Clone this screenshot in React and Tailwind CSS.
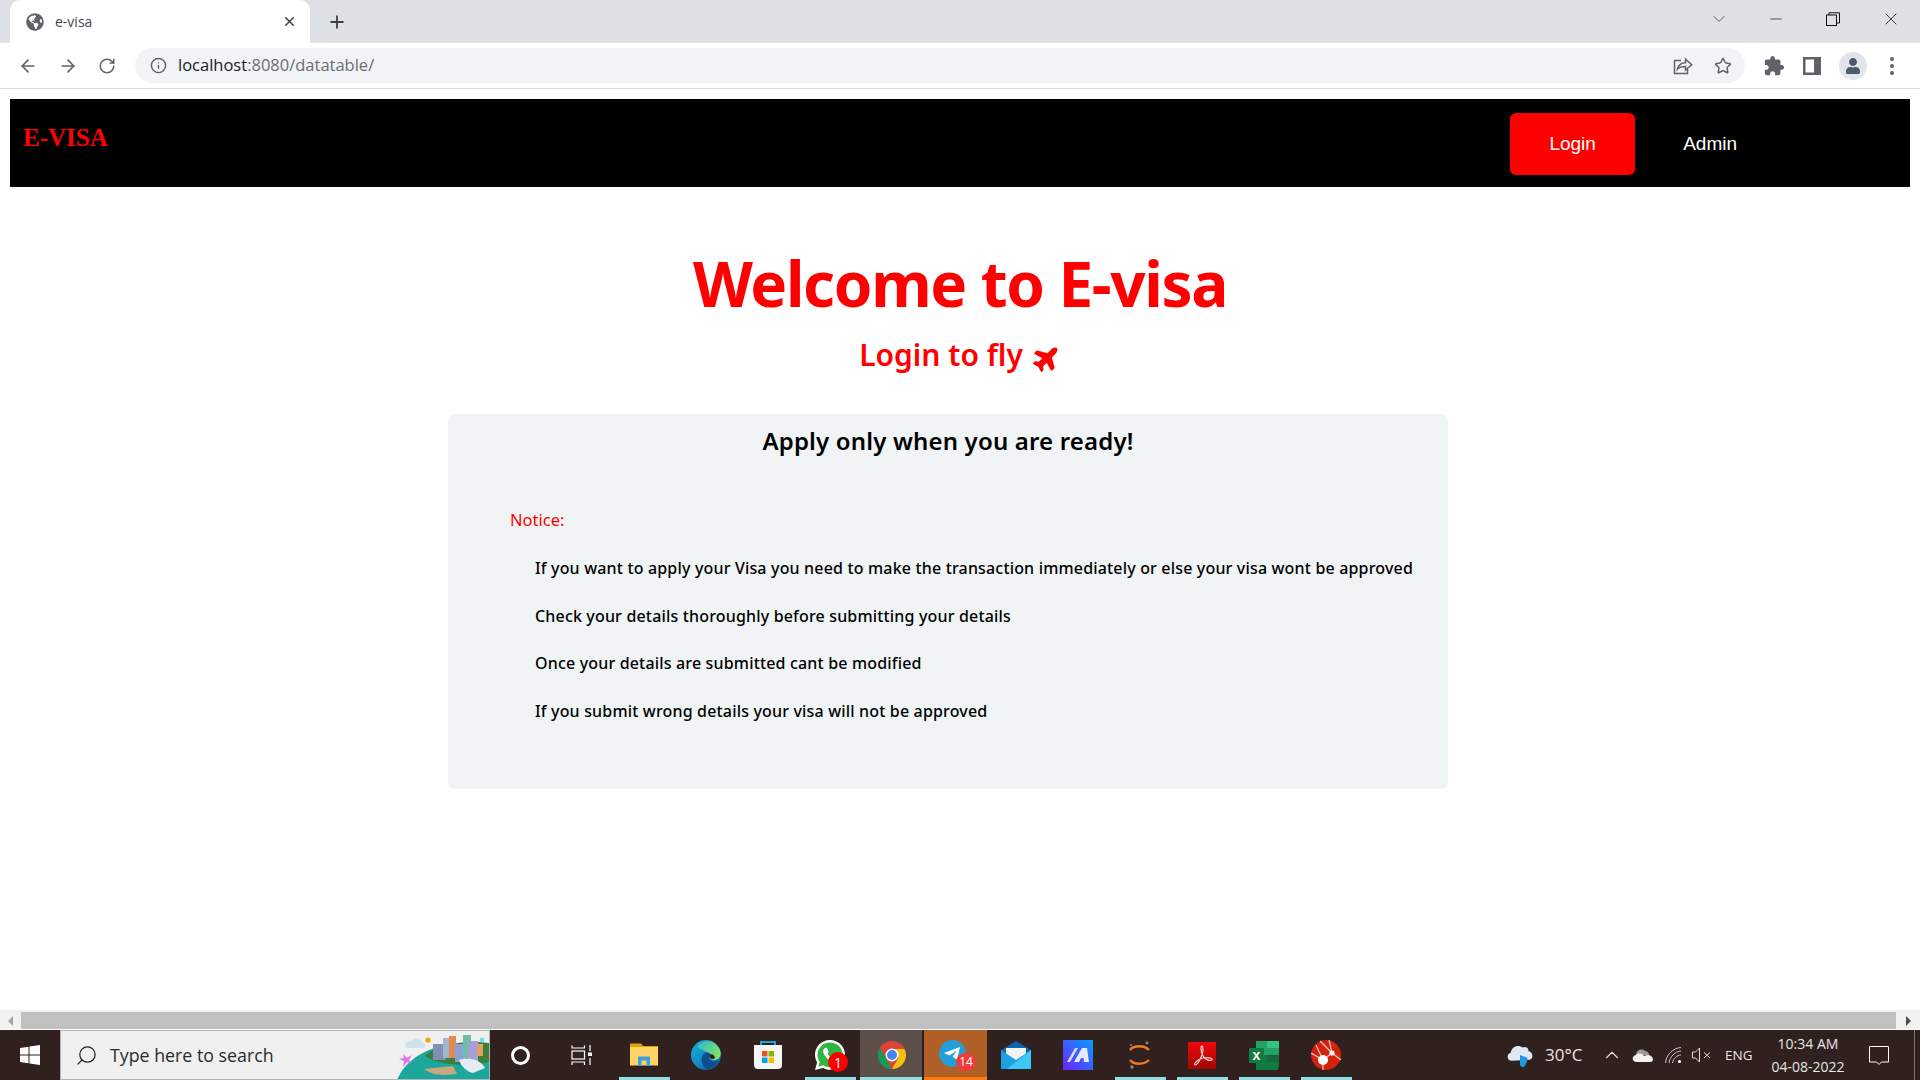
import React from "react";
import { ArrowLeft, ArrowRight, RotateCw, Info, Star, X, Plus, Minus, ChevronDown, ChevronUp, Search } from "lucide-react";
import { FaGlobeAmericas, FaPlane, FaUser } from "react-icons/fa";

const NOTES = [
  "If you want to apply your Visa you need to make the transaction immediately or else your visa wont be approved",
  "Check your details thoroughly before submitting your details",
  "Once your details are submitted cant be modified",
  "If you submit wrong details your visa will not be approved",
];

function TabStrip() {
  return (
    <div className="flex h-[43px] items-end bg-[#dee1e6] pl-[10px]">
      <div className="flex h-[43px] w-[300px] items-center rounded-t-[10px] bg-white pl-[16px] pr-[13px]">
        <FaGlobeAmericas className="h-[18px] w-[18px] text-[#5f6368]" />
        <span className="ml-[11px] flex-1 font-['Open_Sans'] text-[14px] text-[#45494e]">e-visa</span>
        <X className="h-[15px] w-[15px] text-[#3c4043]" strokeWidth={2.4} />
      </div>
      <div className="flex h-[43px] w-[54px] items-center justify-center">
        <Plus className="h-[20px] w-[20px] text-[#3c4043]" strokeWidth={2.2} />
      </div>
      <div className="flex-1" />
      <div className="flex h-[38px] items-center self-start text-[#222]">
        <ChevronDown className="mr-[38px] h-[20px] w-[20px] text-[#3c4043]" strokeWidth={1} />
        <Minus className="mr-[41px] h-[18px] w-[18px]" strokeWidth={1} />
        <svg width="14" height="14" viewBox="0 0 14 14" fill="none" stroke="#111" strokeWidth="1" className="mr-[41px]">
          <rect x="0.5" y="3" width="10" height="10.5" />
          <path d="M3 3V0.8H13.5V11H10.5" />
        </svg>
        <X className="mr-[19px] h-[20px] w-[20px]" strokeWidth={1} />
      </div>
    </div>
  );
}

function Toolbar() {
  return (
    <div className="flex h-[46px] items-center border-b border-[#dadce0] bg-white">
      <div className="flex w-[135px] items-center pl-[18px] text-[#5f6368]">
        <ArrowLeft className="h-[20px] w-[20px]" strokeWidth={2} />
        <ArrowRight className="ml-[20px] h-[20px] w-[20px]" strokeWidth={2} />
        <RotateCw className="ml-[20px] h-[18px] w-[18px]" strokeWidth={2} />
      </div>
      <div className="flex h-[35px] flex-1 items-center rounded-full bg-[#f1f3f4] pl-[15px] pr-[13px]">
        <Info className="h-[17px] w-[17px] text-[#5f6368]" strokeWidth={2} />
        <span className="ml-[11px] flex-1 font-['Open_Sans'] text-[16.5px] text-[#6a6e72]">
          <span className="text-[#202124]">localhost</span>:8080/datatable/
        </span>
        <svg width="20" height="20" viewBox="0 0 20 20" fill="none" stroke="#5f6368" strokeWidth="1.5" className="mr-[21px]">
          <path d="M8 4.5H1.5V17.5H14.5V13" />
          <path d="M4.5 13C5.5 9 8.5 6.8 12.5 6.8V3.2L18.8 8.8 12.5 14V10.5C9.5 10.5 6.5 11 4.5 13Z" />
        </svg>
        <Star className="h-[18px] w-[18px] text-[#5f6368]" strokeWidth={2} />
      </div>
      <div className="flex w-[175px] items-center pl-[18px] text-[#5f6368]">
        <svg width="22" height="22" viewBox="0 0 24 24" fill="#5f6368">
          <path d="M20.500 11H19V7c0-1.100-.9-2-2-2h-4V3.500C13 2.120 11.880 1 10.500 1S8 2.120 8 3.500V5H4c-1.100 0-1.990.9-1.990 2v3.800H3.500c1.490 0 2.700 1.210 2.700 2.700s-1.210 2.700-2.700 2.700H2V20c0 1.100.9 2 2 2h3.800v-1.500c0-1.490 1.210-2.700 2.700-2.700 1.490 0 2.700 1.210 2.700 2.700V22H17c1.100 0 2-.9 2-2v-4h1.500c1.380 0 2.500-1.120 2.500-2.500S21.880 11 20.500 11z" />
        </svg>
        <svg width="18" height="18" viewBox="0 0 18 18" className="ml-[18px]">
          <path fill="#5f6368" fillRule="evenodd" d="M0 0H18V18H0ZM2.500 2.500V15.500H11V2.500Z" />
        </svg>
        <div className="ml-[18px] flex h-[28px] w-[28px] items-center justify-center rounded-full bg-[#e2e5ea]">
          <FaUser className="h-[16px] w-[16px] text-[#4e5a6e]" />
        </div>
        <div className="ml-[23px] flex flex-col gap-[3px]">
          <div className="h-[4px] w-[4px] rounded-full bg-[#5f6368]" />
          <div className="h-[4px] w-[4px] rounded-full bg-[#5f6368]" />
          <div className="h-[4px] w-[4px] rounded-full bg-[#5f6368]" />
        </div>
      </div>
    </div>
  );
}

function Navbar() {
  return (
    <nav className="mx-[10px] mt-[10px] flex h-[88px] items-center bg-black pl-[13px]">
      <span className="mb-[10px] flex-1 font-['Liberation_Serif'] text-[25px] font-bold text-[#ff0000]">E-VISA</span>
      <button className="mr-[48px] mt-[2px] h-[62px] w-[125px] rounded-[6px] bg-[#ff0000] font-['Liberation_Sans'] text-[19px] text-white">Login</button>
      <span className="mr-[173px] mt-[2px] font-['Liberation_Sans'] text-[19px] text-white">Admin</span>
    </nav>
  );
}

function Card() {
  return (
    <section className="ml-[448px] mt-[37px] h-[375px] w-[1000px] rounded-[6px] bg-[#f1f4f5] font-['Noto_Sans'] pt-[10px]">
      <h3 className="text-center text-[24px] font-semibold leading-[34px] tracking-[0.17px] text-black">Apply only when you are ready!</h3>
      <p className="ml-[62px] mt-[50px] text-[16.5px] leading-[24px] text-[#ff0000]">Notice:</p>
      <ul className="ml-[87px] mt-[24px] flex flex-col gap-[23.6px]">
        {NOTES.map((n) => (
          <li key={n} className="whitespace-nowrap text-[16px] font-medium leading-[24px] tracking-[0.17px] text-black">{n}</li>
        ))}
      </ul>
    </section>
  );
}

function Scrollbar() {
  return (
    <div className="flex h-[20px] items-center border-b border-white bg-[#f1f1f1] pt-[2px]">
      <div className="flex h-[17px] w-[21px] items-center justify-center">
        <div className="h-0 w-0 border-y-[5px] border-r-[5px] border-y-transparent border-r-[#a3a3a3]" />
      </div>
      <div className="h-[17px] flex-1 bg-[#c0c0c0]" />
      <div className="flex h-[17px] w-[24px] items-center justify-center">
        <div className="h-0 w-0 border-y-[5px] border-l-[5px] border-y-transparent border-l-[#505050]" />
      </div>
    </div>
  );
}

const Icons = {
  cortana: (
    <div className="h-[19px] w-[19px] rounded-full border-[3px] border-white" />
  ),
  taskview: (
    <svg width="22" height="20" viewBox="0 0 22 20" fill="none" stroke="#fff" strokeWidth="1.2">
      <path d="M1 3.500V0.500M13.500 0.500V3.500M1 3H13.500" />
      <rect x="1" y="6" width="12.500" height="8" />
      <path d="M1 20V17H13.500V20" />
      <path d="M19 0V6M19 13V20" />
      <rect x="17" y="7.500" width="4" height="3.500" fill="#fff" stroke="none" />
    </svg>
  ),
  explorer: (
    <svg width="28" height="24" viewBox="0 0 28 24">
      <path fill="#e0a010" d="M0 0.500H11L13 3H28V22H0Z" />
      <path fill="#ffd563" d="M0 4H28V22.500H0Z" />
      <path fill="#3f9fe0" d="M8 13.500H20V23H16.500V17.500H11.500V23H8Z" />
    </svg>
  ),
  edge: (
    <svg width="30" height="30" viewBox="0 0 30 30">
      <defs>
        <linearGradient id="edgeA" x1="0" y1="0" x2="1" y2="1">
          <stop offset="0" stopColor="#19b3dc" />
          <stop offset="1" stopColor="#0c62b0" />
        </linearGradient>
        <linearGradient id="edgeB" x1="0" y1="0" x2="1" y2="0.500">
          <stop offset="0" stopColor="#2cb6cf" />
          <stop offset="1" stopColor="#7fe06a" />
        </linearGradient>
      </defs>
      <circle cx="15" cy="15" r="15" fill="url(#edgeA)" />
      <path fill="url(#edgeB)" d="M6 7C10 0 24 -2 29 10C31 16 28 20 23 20C20 20 18 18 19 15C17 11 10 10 6 7Z" />
      <path fill="#0f4d8f" d="M11 17C12 12 18 11 20 15C18 15 17 17 18 19C20 22 25 22 28 20C25 27 19 30 15 29C11 26 10 21 11 17Z" />
      <path fill="#2f2320" d="M18 15.500C20 13 24 15 24 18C22 20 18.500 19 18 15.500Z" />
    </svg>
  ),
  store: (
    <svg width="30" height="30" viewBox="0 0 30 30">
      <path fill="none" stroke="#1aa7e0" strokeWidth="2" d="M8 6V2H22V6" />
      <path fill="#f7f7f7" d="M1 5H29V25C29 28 27 29 25 29H5C3 29 1 28 1 25Z" />
      <rect x="9" y="11" width="5.500" height="5.500" fill="#f25022" />
      <rect x="15.500" y="11" width="5.500" height="5.500" fill="#7fba00" />
      <rect x="9" y="17.500" width="5.500" height="5.500" fill="#00a4ef" />
      <rect x="15.500" y="17.500" width="5.500" height="5.500" fill="#ffb900" />
    </svg>
  ),
  whatsapp: (
    <div className="relative h-[30px] w-[30px]">
      <svg width="30" height="30" viewBox="0 0 30 30">
        <path fill="#fff" d="M15 0C6.700 0 0 6.600 0 14.800C0 17.600 0.800 20.200 2.100 22.400L0 30L8 27.900C10.200 29.100 12.500 29.700 15 29.700C23.300 29.700 30 23 30 14.800C30 6.600 23.300 0 15 0Z" />
        <path fill="#2bb741" d="M15 2.400C8 2.400 2.500 7.900 2.500 14.800C2.500 17.400 3.300 19.800 4.700 21.800L3.400 26.500L8.300 25.300C10.300 26.600 12.600 27.300 15 27.300C22 27.300 27.600 21.700 27.600 14.800C27.600 7.900 22 2.400 15 2.400Z" />
        <path fill="#fff" d="M10.500 7.800C9.500 8 8 9.300 8.200 11.600C8.400 15 12.800 21 18.800 21.800C21 22 22.400 20.300 22.400 19C22.400 18.300 19.600 16.800 19 16.900C18.300 17.100 17.800 18.400 17.200 18.200C15.400 17.600 13.200 15.200 12.600 13.800C12.400 13.200 13.500 12.600 13.600 12C13.600 11.200 12.200 8 11.600 7.800Z" />
      </svg>
      <div className="absolute bottom-[-2px] right-[-3px] flex h-[20px] w-[20px] items-center justify-center rounded-full bg-[#ff0000] font-['Open_Sans'] text-[14px] text-white">1</div>
    </div>
  ),
  chrome: (
    <svg width="28" height="28" viewBox="0 0 28 28">
      <circle cx="14" cy="14" r="14" fill="#db4437" />
      <path fill="#0f9d58" d="M14 28C6.300 28 0 21.700 0 14C0 11.400 0.700 9 2 7L9 19.500L14 28Z" />
      <path fill="#f4c20d" d="M14 8H26.200C27.400 9.800 28 11.800 28 14C28 21.700 21.700 28 14 28L20.500 17Z" />
      <circle cx="14" cy="14" r="6.500" fill="#fff" />
      <circle cx="14" cy="14" r="5" fill="#4285f4" />
    </svg>
  ),
  telegram: (
    <div className="relative h-[30px] w-[30px]">
      <svg width="27" height="27" viewBox="0 0 27 27">
        <circle cx="13.500" cy="13.500" r="13.500" fill="#229ed9" />
        <path fill="#fff" d="M5 13L21 7L18 20L13.500 16.500L18 10.500L10.500 15.500Z" />
      </svg>
      <div className="absolute bottom-[-1px] right-[-7px] flex h-[18px] w-[20px] items-center justify-center rounded-full bg-[#ef3b3b] font-['Open_Sans'] text-[12px] text-white">14</div>
    </div>
  ),
  mail: (
    <svg width="30" height="28" viewBox="0 0 30 28">
      <path fill="#0c64ad" d="M15 0L30 9V14H0V9Z" />
      <path fill="#f2f2f2" d="M5 7H25V16L15 21L5 16Z" />
      <path fill="#1ba1e2" d="M0 9L15 19L30 9V28H0Z" />
      <path fill="#3cc8f7" d="M30 9V28H6Z" />
    </svg>
  ),
  mark: (
    <svg width="30" height="30" viewBox="0 0 30 30">
      <defs>
        <linearGradient id="markG" x1="0" y1="1" x2="1" y2="0">
          <stop offset="0" stopColor="#6a22ff" />
          <stop offset="1" stopColor="#0a9cff" />
        </linearGradient>
      </defs>
      <rect width="30" height="30" fill="url(#markG)" />
      <path fill="#d8d8ff" d="M4 22L12 8H15L7 22Z" />
      <path fill="#e8eaff" d="M11 22L19 8H24L26 22H21L20.500 18H18L16 22Z" />
    </svg>
  ),
  sync: (
    <svg width="24" height="28" viewBox="0 0 24 28" fill="none">
      <path d="M2 9C6 4 16 4 21 9" stroke="#ef7d1f" strokeWidth="2.400" />
      <path d="M2 19C6 24 16 24 21 19" stroke="#ef7d1f" strokeWidth="2.400" />
      <circle cx="3" cy="4" r="1" fill="#888" />
      <circle cx="19" cy="2" r="1.400" fill="#888" />
      <circle cx="4" cy="26" r="1.700" fill="#888" />
    </svg>
  ),
  acrobat: (
    <svg width="28" height="27" viewBox="0 0 28 27">
      <defs>
        <linearGradient id="acro" x1="0" y1="0" x2="0" y2="1">
          <stop offset="0" stopColor="#ee0a0a" />
          <stop offset="1" stopColor="#a40505" />
        </linearGradient>
      </defs>
      <rect width="28" height="27" fill="url(#acro)" />
      <path fill="none" stroke="#f0d0d0" strokeWidth="1.200" d="M14 4C12 4 13 10 15 14C17 18 22 19 24 18C25 16 20 15 15 16C10 17 5 22 7 23C9 23 12 18 14 13C15 10 15.500 5 14 4Z" />
    </svg>
  ),
  excel: (
    <svg width="30" height="29" viewBox="0 0 30 29">
      <path fill="#21a366" d="M7 0H30V14H7Z" />
      <path fill="#33c481" d="M18 0H30V7H18Z" />
      <path fill="#107c41" d="M7 14H30V22C30 27 29 29 28 29H7Z" />
      <path fill="#185c37" d="M18 14H30V21H18Z" opacity="0.600" />
      <rect y="7" width="15" height="15" rx="1" fill="#107c41" />
      <text x="7.500" y="19" textAnchor="middle" fontSize="14" fontWeight="bold" fontFamily="Liberation Sans" fill="#fff">x</text>
    </svg>
  ),
  red: (
    <svg width="30" height="30" viewBox="0 0 30 30">
      <circle cx="15" cy="15" r="15" fill="#d2230f" />
      <path fill="none" stroke="#f4c8bf" strokeWidth="1.200" d="M0 13L12 20L21 13L18 0M12 20L12 30M21 13L30 20M12 20L5 5M21 13L9 1" />
      <circle cx="12" cy="20" r="5" fill="#fff" />
      <circle cx="21" cy="13" r="2.600" fill="#fff" />
    </svg>
  ),
};

function Slot({ children, line, active, hot }) {
  return (
    <div className="relative flex h-[50px] w-[62px] shrink-0 items-center justify-center">
      {active && <div className="absolute inset-y-0 left-[-2px] right-[2px] bg-[#5d504b]" />}
      {hot && <div className="absolute inset-y-0 left-0 right-[-1px] bg-[#b05f26]" />}
      {hot && <div className="absolute bottom-0 left-0 right-[-1px] h-[3px] bg-[#ff7a12]" />}
      <div className="relative left-[-1px]">{children}</div>
      {line && <div className="absolute bottom-0 left-[5px] right-[6px] h-[3px] bg-[#8fdfe4]" />}
      {active && <div className="absolute bottom-0 left-[-2px] right-[2px] h-[3px] bg-[#8fdfe4]" />}
    </div>
  );
}

function SearchArt() {
  return (
    <svg width="92" height="50" viewBox="0 0 92 50" className="shrink-0">
      <path fill="#1ba79b" d="M0 50C8 30 30 16 60 14H92V50Z" />
      <path fill="#3c7e3c" d="M28 26C40 14 70 10 92 13V32C72 36 42 36 28 26Z" />
      <rect x="36" y="14" width="13" height="16" fill="#7f8fb5" />
      <rect x="46" y="8" width="6" height="20" fill="#9fb6cf" />
      <rect x="52" y="6" width="7" height="22" fill="#e08a52" />
      <rect x="58" y="14" width="11" height="18" fill="#8ba0d8" />
      <rect x="66" y="5" width="8" height="23" fill="#6fbfa6" />
      <rect x="71" y="11" width="10" height="20" fill="#a89fd8" />
      <rect x="80" y="14" width="6" height="12" fill="#e8a060" />
      <path fill="#e4ecf5" d="M62 30C72 26 84 30 88 38L76 43C70 42 64 36 62 30Z" />
      <path fill="#caa77e" d="M27 39L56 36L60 44C50 44 40 48 27 39Z" />
      <path fill="#cfe2ee" d="M8 16C8 11 13 11 14 12C16 6 25 8 25 13C29 13 29 18 26 18H10C8 18 8 17 8 16Z" />
      <circle cx="31" cy="10" r="2.600" fill="#f7a600" />
      <circle cx="85" cy="10" r="2.400" fill="#69dff0" />
      <path fill="#e46df0" d="M6 24L10 28L15 25L12 30L15 34L10 32L6 37L7 31L2 29L7 28Z" />
    </svg>
  );
}

function Tray() {
  return (
    <div className="flex h-[50px] flex-1 items-center pl-[148px] font-['Open_Sans'] text-white">
      <svg width="28" height="27" viewBox="0 0 30 27">
        <path fill="#dfe8f5" d="M6 19C1 19 0 12 5 10.500C6 4 13 1 18 5C21 3 25 6 24 9C29 9 30 18 25 18Z" />
        <path fill="#1f9ae0" d="M15 13L23 16C23 20 21 25 18 26C16 26 15 24 15 22Z" />
      </svg>
      <span className="ml-[11px] w-[38px] text-[17px] text-[#e6e6e6]">30°C</span>
      <ChevronUp className="ml-[18px] h-[22px] w-[22px] text-[#e0e0e0]" strokeWidth={1.2} />
      <svg width="21" height="14" viewBox="0 0 21 14" className="ml-[9px]">
        <path fill="#999" d="M4 7C4 2 10 0 13 3C15 3 17 4 17 7Z" />
        <path fill="#f2f2f2" d="M4 14C0 14 -1 8 4 7C7 4 11 6 12 8C16 6 20 7 21 11C21 13 20 14 18 14Z" />
      </svg>
      <svg width="17" height="17" viewBox="0 0 17 17" fill="none" stroke="#c8c8c8" strokeWidth="1" className="ml-[12px]">
        <path d="M0.500 16C1 8 8 1 16 0.500M4 16C4.500 10 10 4.500 16 4M7.500 16C8 12 12 8 16 8" />
        <circle cx="14.500" cy="14.500" r="1.600" fill="#fff" stroke="none" />
      </svg>
      <svg width="20" height="16" viewBox="0 0 20 16" fill="none" stroke="#e0e0e0" strokeWidth="1" className="ml-[10px]">
        <path d="M0.500 5H3.500L7.500 1V15L3.500 11H0.500Z" />
        <path d="M12 5.500L18 11M18 5.500L12 11" />
      </svg>
      <span className="ml-[13px] w-[30px] text-[13.5px] text-[#e6e6e6]">ENG</span>
      <div className="ml-[11px] flex w-[84px] flex-col items-center text-[14px] leading-[23px] text-[#e6e6e6]">
        <span>10:34 AM</span>
        <span>04-08-2022</span>
      </div>
      <svg width="20" height="19" viewBox="0 0 20 19" fill="none" stroke="#fff" strokeWidth="1" className="ml-[19px]">
        <path d="M0.500 0.500H19.500V16H12.500L10 18.500L7.500 16H0.500Z" />
      </svg>
      <div className="ml-[25px] h-[50px] w-px bg-[#777]" />
    </div>
  );
}

function Taskbar() {
  return (
    <div className="flex h-[50px] items-center bg-[#30211e]">
      <div className="flex h-[50px] w-[60px] shrink-0 items-center justify-center">
        <svg width="20" height="20" viewBox="0 0 20 20" fill="#fff">
          <path d="M0 3L8.500 1.700V9.500H0ZM9.500 1.500L20 0V9.500H9.500ZM0 10.500H8.500V18.300L0 17ZM9.500 10.500H20V20L9.500 18.500Z" />
        </svg>
      </div>
      <div className="flex h-[50px] w-[430px] shrink-0 items-center overflow-hidden border border-[#b5b5b5] bg-[#f0f0f0] pl-[14px]">
        <Search className="h-[23px] w-[23px] -scale-x-100 text-[#222]" strokeWidth={1.3} />
        <span className="ml-[12px] flex-1 font-['Open_Sans'] text-[17.8px] text-[#2b2b2b]">Type here to search</span>
        <SearchArt />
      </div>
      <Slot>{Icons.cortana}</Slot>
      <Slot>{Icons.taskview}</Slot>
      <Slot line>{Icons.explorer}</Slot>
      <Slot>{Icons.edge}</Slot>
      <Slot>{Icons.store}</Slot>
      <Slot line>{Icons.whatsapp}</Slot>
      <Slot active>{Icons.chrome}</Slot>
      <Slot hot>{Icons.telegram}</Slot>
      <Slot>{Icons.mail}</Slot>
      <Slot>{Icons.mark}</Slot>
      <Slot line>{Icons.sync}</Slot>
      <Slot line>{Icons.acrobat}</Slot>
      <Slot line>{Icons.excel}</Slot>
      <Slot line>{Icons.red}</Slot>
      <Tray />
    </div>
  );
}

export default function App() {
  return (
    <div className="flex h-screen w-full flex-col overflow-hidden bg-white">
      <TabStrip />
      <Toolbar />
      <main className="min-h-0 flex-1">
        <Navbar />
        <div className="mt-[56px] text-center font-['Noto_Sans'] text-[#ff0000]">
          <h1 className="text-[62px] font-bold leading-[80px] tracking-[-1.35px]">Welcome to E-visa</h1>
          <h2 className="mt-[10px] text-[30px] font-semibold leading-[44px]">
            Login to fly <FaPlane className="ml-[2px] inline h-[28px] w-[28px] -rotate-45" />
          </h2>
        </div>
        <Card />
      </main>
      <Scrollbar />
      <Taskbar />
    </div>
  );
}
